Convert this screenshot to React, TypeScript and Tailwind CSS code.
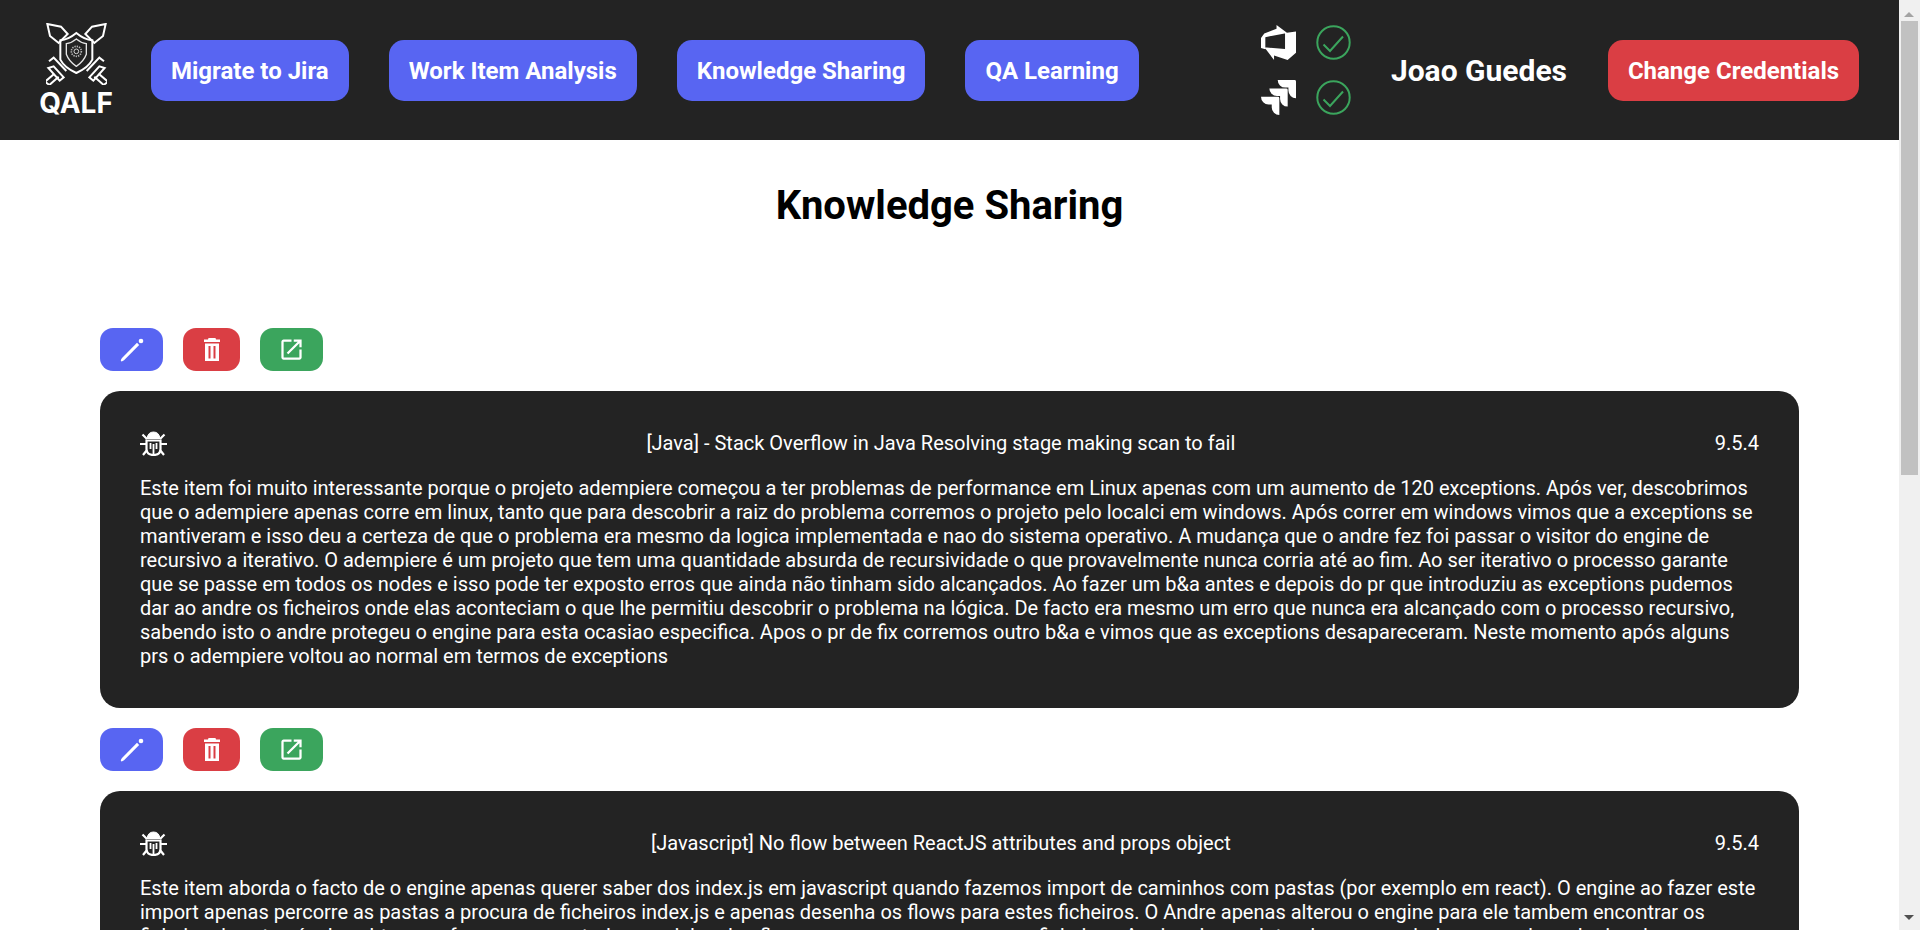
const NavButton = ({ children }: { children: string }) => (
  <button className="h-[61px] rounded-[15px] bg-[#5865f2] px-5 pt-[2px] text-2xl font-bold whitespace-nowrap text-white">{children}</button>
);

const Check = () => (
  <svg width="35" height="35" viewBox="0 0 35 35" fill="none" stroke="#3ba55d" strokeWidth="2">
    <circle cx="17.5" cy="17.5" r="16.2" />
    <path d="M7.5 19.5l6.5 6.5L27 11.5" />
  </svg>
);

const Logo = () => (
  <div className="flex w-[72px] shrink-0 flex-col items-center">
    <svg width="61" height="62" viewBox="75 40 183 186" fill="none" stroke="white" strokeWidth="6" strokeLinejoin="miter">
      <path d="M79 43l41 8 20 22-27 27-26-21z" />
      <path d="M254 43l-41 8-20 22 27 27 26-21z" />
      <path d="M118 92q24-2 48-22 24 20 48 22v58q-12 24-48 40-36-16-48-40z" />
      <path d="M136 102q16-2 30-14 14 12 30 14v32q-8 22-30 36-22-14-30-36z" strokeWidth="4" stroke="#e5e5e5" />
      <circle cx="166" cy="125" r="15" strokeWidth="5" stroke="#b5b5b5" strokeDasharray="4 3" />
      <circle cx="166" cy="125" r="7" strokeWidth="3" stroke="#d5d5d5" />
      <path d="M84 155l14-11 38 40M98 170l30 33-12 10-34-38z" />
      <path d="M249 155l-14-11-38 40M235 170l-30 33 12 10 34-38z" />
      <path d="M100 192l-28 24 13 10 28-25M233 192l28 24-13 10-28-25" />
    </svg>
    <span className="mt-[5px] font-['Inter',sans-serif] text-[28px] leading-[27px] font-bold text-white">QALF</span>
  </div>
);

const Actions = () => (
  <div className="flex gap-5">
    <button className="flex h-[43px] w-[63px] items-center justify-center rounded-[13px] bg-[#5865f2]">
      <svg width="24" height="24" viewBox="0 0 24 24" fill="white">
        <path d="M.8 22.6Q1 21.200 2 20L17 4.800l2.200 2.200L4 22.200Q2.800 23.300 1.500 23.400.7 23.400.8 22.600z" />
        <circle cx="21" cy="3" r="2.300" />
      </svg>
    </button>
    <button className="flex h-[43px] w-[57px] items-center justify-center rounded-[13px] bg-[#da3e44]">
      <svg width="16" height="23" viewBox="0 0 16 23" fill="white" fillRule="evenodd">
        <path d="M4.500 0h7l.5 1.500h4V4H0V1.500h4zM1 5.500h14V23H1zM4.500 8v12.500h2V8zM9.500 8v12.500h2V8z" />
      </svg>
    </button>
    <button className="flex h-[43px] w-[63px] items-center justify-center rounded-[13px] bg-[#3ba55d]">
      <svg width="27" height="27" viewBox="0 0 24 24" fill="white">
        <path d="M19 19H5V5h7V3H5c-1.110 0-2 .9-2 2v14c0 1.100.89 2 2 2h14c1.100 0 2-.9 2-2v-7h-2v7zM14 3v2h3.590l-9.830 9.830 1.410 1.410L19 6.410V10h2V3h-7z" />
      </svg>
    </button>
  </div>
);

const Bug = () => (
  <svg width="27" height="25" viewBox="0 0 27 25" fill="none" stroke="white" strokeWidth="2.2">
    <path d="M7 7.500Q8 1 13.500 1T20 7.500z" fill="white" stroke="white" strokeWidth="1" />
    <path d="M6.500 9.500h14v8.500q0 6-7 6t-7-6z" />
    <path d="M13.500 13v11M10.500 12v6M16.500 12v6" strokeWidth="1.800" />
    <path d="M0 13h6.500M20.500 13H27M2.500 3.500l4.500 4.500M24.500 3.500L20 8M3 24l4-5M24 24l-4-5" />
  </svg>
);

const Card = ({ title, lines }: { title: string; lines: string[] }) => (
  <div className="rounded-[20px] bg-[#232323] px-10 pt-[39px] pb-10 text-[20px] leading-6 text-white">
    <div className="flex h-[27px] items-center justify-between">
      <Bug />
      <span className="pb-[2px]">{title}</span>
      <span className="pb-[2px]">9.5.4</span>
    </div>
    <div className="mt-[19px]">
      {lines.map((line) => (
        <p key={line} className="whitespace-nowrap">{line}</p>
      ))}
    </div>
  </div>
);

const Scrollbar = () => (
  <div className="flex w-[21px] shrink-0 flex-col items-center bg-[#f0f0f0] pr-[1px]">
    <div className="mt-[12px] h-0 w-0 border-x-[5px] border-b-[5px] border-x-transparent border-b-[#a3a3a3]" />
    <div className="mt-[4px] h-[454px] w-[17px] bg-[#c1c1c1]" />
    <div className="mt-auto mb-[10px] h-0 w-0 border-x-[5px] border-t-[5px] border-x-transparent border-t-[#505050]" />
  </div>
);

const first = [
  "Este item foi muito interessante porque o projeto adempiere começou a ter problemas de performance em Linux apenas com um aumento de 120 exceptions. Após ver, descobrimos",
  "que o adempiere apenas corre em linux, tanto que para descobrir a raiz do problema corremos o projeto pelo localci em windows. Após correr em windows vimos que a exceptions se",
  "mantiveram e isso deu a certeza de que o problema era mesmo da logica implementada e nao do sistema operativo. A mudança que o andre fez foi passar o visitor do engine de",
  "recursivo a iterativo. O adempiere é um projeto que tem uma quantidade absurda de recursividade o que provavelmente nunca corria até ao fim. Ao ser iterativo o processo garante",
  "que se passe em todos os nodes e isso pode ter exposto erros que ainda não tinham sido alcançados. Ao fazer um b&a antes e depois do pr que introduziu as exceptions pudemos",
  "dar ao andre os ficheiros onde elas aconteciam o que lhe permitiu descobrir o problema na lógica. De facto era mesmo um erro que nunca era alcançado com o processo recursivo,",
  "sabendo isto o andre protegeu o engine para esta ocasiao especifica. Apos o pr de fix corremos outro b&a e vimos que as exceptions desapareceram. Neste momento após alguns",
  "prs o adempiere voltou ao normal em termos de exceptions",
];

const second = [
  "Este item aborda o facto de o engine apenas querer saber dos index.js em javascript quando fazemos import de caminhos com pastas (por exemplo em react). O engine ao fazer este",
  "import apenas percorre as pastas a procura de ficheiros index.js e apenas desenha os flows para estes ficheiros. O Andre apenas alterou o engine para ele tambem encontrar os",
  "ficheiros jsx através de subtypes e fazer com que todos os ciclos dos flows passem por esses novos ficheiros. Aqui podemos ir tambem ver e ajudar a perceber a logica do",
];

export default function App() {
  return (
    <div className="flex h-screen overflow-hidden font-['Roboto',sans-serif]">
      <div className="min-w-0 flex-1">
        <header className="flex h-[140px] items-center bg-[#232323] px-10">
          <Logo />
          <div className="ml-[39px] flex gap-10">
            <NavButton>Migrate to Jira</NavButton>
            <NavButton>Work Item Analysis</NavButton>
            <NavButton>Knowledge Sharing</NavButton>
            <NavButton>QA Learning</NavButton>
          </div>
          <div className="ml-auto flex items-center">
            <div className="grid grid-cols-[35px_35px] items-center gap-x-5 gap-y-5">
              <svg width="35" height="35" viewBox="0 0 24 24" fill="white">
                <path d="M0 8.877L2.247 5.910l8.405-3.416V.022l7.370 5.393L2.966 8.338v8.225L0 15.707zm24-4.450v14.651l-5.753 4.900-9.303-3.057v3.056l-6.640-8.662 14.180 1.126V5.415z" />
              </svg>
              <Check />
              <svg width="35" height="35" viewBox="0 0 24 24" fill="white">
                <path d="M11.571 11.513H0a5.218 5.218 0 0 0 5.232 5.215h2.130v2.057A5.215 5.215 0 0 0 12.575 24V12.518a1.005 1.005 0 0 0-1.005-1.005zm5.723-5.756H5.736a5.215 5.215 0 0 0 5.215 5.214h2.129v2.058a5.218 5.218 0 0 0 5.215 5.214V6.758a1.001 1.001 0 0 0-1.001-1.001zM23.013 0H11.455a5.215 5.215 0 0 0 5.215 5.215h2.129v2.057A5.215 5.215 0 0 0 24 12.483V1.005A1.001 1.001 0 0 0 23.013 0Z" />
              </svg>
              <Check />
            </div>
            <span className="ml-10 pt-[1px] text-[30px] font-bold whitespace-nowrap text-white">Joao Guedes</span>
            <button className="ml-[41px] h-[61px] w-[251px] rounded-[15px] bg-[#da3e44] pt-[2px] text-2xl font-bold whitespace-nowrap text-white">Change Credentials</button>
          </div>
        </header>
        <main className="px-[100px]">
          <h1 className="mt-[42px] mb-[99px] text-center text-[40px] leading-[47px] font-bold text-black">Knowledge Sharing</h1>
          <Actions />
          <div className="my-5">
            <Card title="[Java] - Stack Overflow in Java Resolving stage making scan to fail" lines={first} />
          </div>
          <Actions />
          <div className="my-5">
            <Card title="[Javascript] No flow between ReactJS attributes and props object" lines={second} />
          </div>
        </main>
      </div>
      <Scrollbar />
    </div>
  );
}
